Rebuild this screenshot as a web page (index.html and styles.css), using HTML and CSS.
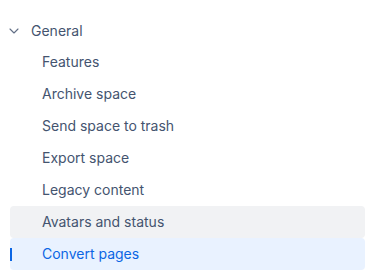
FILE: index.html
```html
<!DOCTYPE html>
<html lang="en">
<head>
  <meta charset="UTF-8">
  <meta name="viewport" content="width=device-width, initial-scale=1.0">
  <title>Space settings</title>
  <link rel="stylesheet" href="styles.css">
</head>
<body>
  <nav class="tree">
    <div class="group">
      <svg class="chevron" width="10" height="10" viewBox="0 0 10 10"><path d="M1 3l4 4 4-4" fill="none" stroke="#626f86" stroke-width="1.1" stroke-linecap="round" stroke-linejoin="round"/></svg>
      <span>General</span>
    </div>
    <ul class="items">
      <li class="item">Features</li>
      <li class="item">Archive space</li>
      <li class="item">Send space to trash</li>
      <li class="item">Export space</li>
      <li class="item">Legacy content</li>
      <li class="item hover">Avatars and status</li>
      <li class="item selected">Convert pages</li>
    </ul>
  </nav>
</body>
</html>
```

FILE: styles.css
```css
body {
  margin: 0;
  padding: 14px 13px 0 10px;
  font-family: Inter, "Noto Sans", sans-serif;
  font-size: 14px;
  color: #44546f;
  background: #fff;
}
.group {
  display: flex;
  align-items: center;
  height: 32px;
  gap: 12px;
}
.chevron {
  margin-left: -1px;
  margin-top: 1px;
}
.items {
  list-style: none;
  margin: 0;
  padding: 0;
}
.item {
  position: relative;
  height: 32px;
  line-height: 32px;
  padding-left: 32px;
  border-radius: 4px;
}
.item.hover {
  background: #f1f2f4;
}
.item.selected {
  background: #e9f2ff;
  color: #0c66e4;
}
.item.selected::before {
  content: "";
  position: absolute;
  left: 0;
  top: 10px;
  width: 2px;
  height: 13px;
  background: #0c66e4;
}
```
